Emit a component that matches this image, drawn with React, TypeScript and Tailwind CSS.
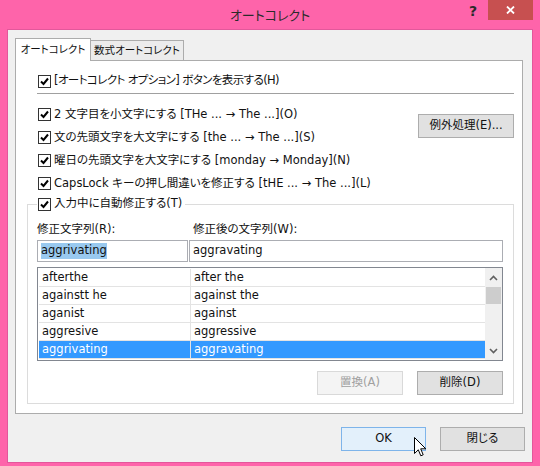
import React from "react";

const rows = [
  { from: "afterthe", to: "after the" },
  { from: "againstt he", to: "against the" },
  { from: "aganist", to: "against" },
  { from: "aggresive", to: "aggressive" },
  { from: "aggrivating", to: "aggravating", selected: true },
];

const options = [
  "2 文字目を小文字にする [THe ... → The ...](O)",
  "文の先頭文字を大文字にする [the ... → The ...](S)",
  "曜日の先頭文字を大文字にする [monday → Monday](N)",
  "CapsLock キーの押し間違いを修正する [tHE ... → The ...](L)",
];

function Check() {
  return (
    <span className="flex h-[13px] w-[13px] shrink-0 items-center justify-center border border-[#333333] bg-white">
      <svg width="9" height="9" viewBox="0 0 9 9">
        <path d="M1 4.5 L3.5 7 L8 1.5" fill="none" stroke="#000" strokeWidth="2" />
      </svg>
    </span>
  );
}

function CheckRow({ label, className = "" }: { label: string; className?: string }) {
  return (
    <div className={`flex items-center gap-[3px] pl-[1px] ${className}`}>
      <Check />
      <span className="whitespace-nowrap">{label}</span>
    </div>
  );
}

function Button({ children, className = "" }: { children: React.ReactNode; className?: string }) {
  return (
    <button
      type="button"
      className={`flex h-[24px] items-center justify-center border ${className}`}
    >
      {children}
    </button>
  );
}

export default function App() {
  return (
    <div className="relative flex h-[466px] w-[540px] flex-col bg-[#fe64aa] pb-[3px] text-[11.5px] leading-none text-[#111] [font-family:'DejaVu_Sans','Noto_Sans_CJK_JP',sans-serif] [font-feature-settings:'palt']">
      {/* title bar */}
      <div className="flex h-[29px] items-start">
        <div className="w-[80px]" />
        <div className="flex h-[29px] flex-1 items-center justify-center pt-px text-[13px] text-[#2b2b2b]">
          オートコレクト
        </div>
        <div className="flex w-[80px] items-start pr-[7px]">
          <div className="flex h-[22px] w-[26px] items-center justify-center text-[14px] font-bold text-[#2b2b2b]">?</div>
          <div className="ml-[2px] flex h-[20px] w-[45px] items-center justify-center bg-[#c75050]">
            <svg width="9" height="8" viewBox="0 0 9 8">
              <path d="M1 0.5 L8 7.5 M8 0.5 L1 7.5" stroke="#fff" strokeWidth="1.8" />
            </svg>
          </div>
        </div>
      </div>

      {/* client area */}
      <div className="mx-[7px] flex flex-1 flex-col border border-[#e2589b] bg-[#f0f0f0] pl-[7px] pt-[8px]">
        {/* tabs */}
        <div className="relative z-10 flex items-end text-[10.5px]">
          <div className="-mb-px flex h-[23px] w-[76px] items-center justify-center border border-b-0 border-[#acacac] bg-white pb-[2px]">
            オートコレクト
          </div>
          <div className="flex h-[20px] w-[93px] items-center justify-center border border-b-0 border-l-0 border-[#acacac] bg-[#ececec]">
            数式オートコレクト
          </div>
        </div>

        {/* tab panel */}
        <div className="flex w-[508px] flex-col border border-[#acacac] bg-white pb-[9px] pl-[11px] pr-[8px]">
          <CheckRow
            label="[オートコレクト オプション] ボタンを表示する(H)"
            className="ml-[10px] mt-[11px] h-[18px] tracking-[-0.6px]"
          />
          <div className="ml-[10px] mt-[3px] h-px bg-[#a0a0a0]" />
          <div className="ml-[10px] mt-[9px] flex justify-between">
            <div className="flex flex-col">
              {options.map((o) => (
                <CheckRow key={o} label={o} className="h-[23px]" />
              ))}
            </div>
            <Button className="mt-[11px] w-[96px] border-[#adadad] bg-[#e1e1e1]">例外処理(E)...</Button>
          </div>

          {/* group box */}
          <fieldset className="border border-[#dcdcdc] pb-[8px] pl-[9px] pr-[10px]">
            <legend className="pr-[3px]">
              <CheckRow label="入力中に自動修正する(T)" className="h-[18px]" />
            </legend>
            <div className="mt-[9px] grid h-[16px] grid-cols-[152px_1fr] items-center">
              <span>修正文字列(R):</span>
              <span className="pl-[4px]">修正後の文字列(W):</span>
            </div>
            <div className="mt-[2px] grid h-[22px] grid-cols-[151px_1fr] gap-[1px]">
              <div className="flex items-center border border-[#abadb3] bg-white pl-[3px]">
                <span className="bg-[#99c9ef] py-[2px]">aggrivating</span>
              </div>
              <div className="flex items-center border border-[#abadb3] bg-white pl-[3px]">aggravating</div>
            </div>

            {/* list */}
            <div className="mt-[5px] flex h-[94px] border border-[#828790] bg-white">
              <div className="flex flex-1 flex-col pl-[1px] pt-[1px]">
                {rows.map((r) => (
                  <div
                    key={r.from}
                    className={`flex h-[18px] border-b border-[#e3e3e3] ${r.selected ? "bg-[#3399ff] text-white" : ""}`}
                  >
                    <div className="flex w-[152px] items-center border-r border-[#e3e3e3] pl-[3px]">{r.from}</div>
                    <div className="flex flex-1 items-center pl-[3px]">{r.to}</div>
                  </div>
                ))}
              </div>
              <div className="flex w-[17px] flex-col bg-[#f0f0f0]">
                <div className="flex h-[19px] items-center justify-center">
                  <svg width="9" height="6" viewBox="0 0 9 6">
                    <path d="M1 5 L4.5 1.5 L8 5" fill="none" stroke="#606060" strokeWidth="1.6" />
                  </svg>
                </div>
                <div className="mx-[1px] h-[17px] bg-[#cdcdcd]" />
                <div className="flex-1" />
                <div className="flex h-[18px] items-center justify-center">
                  <svg width="9" height="6" viewBox="0 0 9 6">
                    <path d="M1 1 L4.5 4.5 L8 1" fill="none" stroke="#606060" strokeWidth="1.6" />
                  </svg>
                </div>
              </div>
            </div>

            <div className="mt-[10px] flex justify-end gap-[14px]">
              <Button className="w-[86px] border-[#d9d9d9] bg-[#f4f4f4] text-[#a0a0a0]">置換(A)</Button>
              <Button className="w-[86px] border-[#adadad] bg-[#e1e1e1]">削除(D)</Button>
            </div>
          </fieldset>
        </div>

        {/* dialog buttons */}
        <div className="mt-[13px] flex justify-end gap-[14px] pr-[7px]">
          <Button className="w-[85px] border-[#7eb4ea] bg-[#e3f0fb]">OK</Button>
          <Button className="w-[85px] border-[#adadad] bg-[#e1e1e1]">閉じる</Button>
        </div>
      </div>

      {/* mouse pointer */}
      <svg className="absolute left-[414px] top-[437px]" width="13" height="21" viewBox="0 0 13 21">
        <path
          d="M0.5 0.5 L0.5 16.5 L4.3 12.8 L6.8 18.8 L9.2 17.8 L6.7 11.8 L11.8 11.8 Z"
          fill="#fff"
          stroke="#000"
          strokeWidth="1"
          strokeLinejoin="round"
        />
      </svg>
    </div>
  );
}
